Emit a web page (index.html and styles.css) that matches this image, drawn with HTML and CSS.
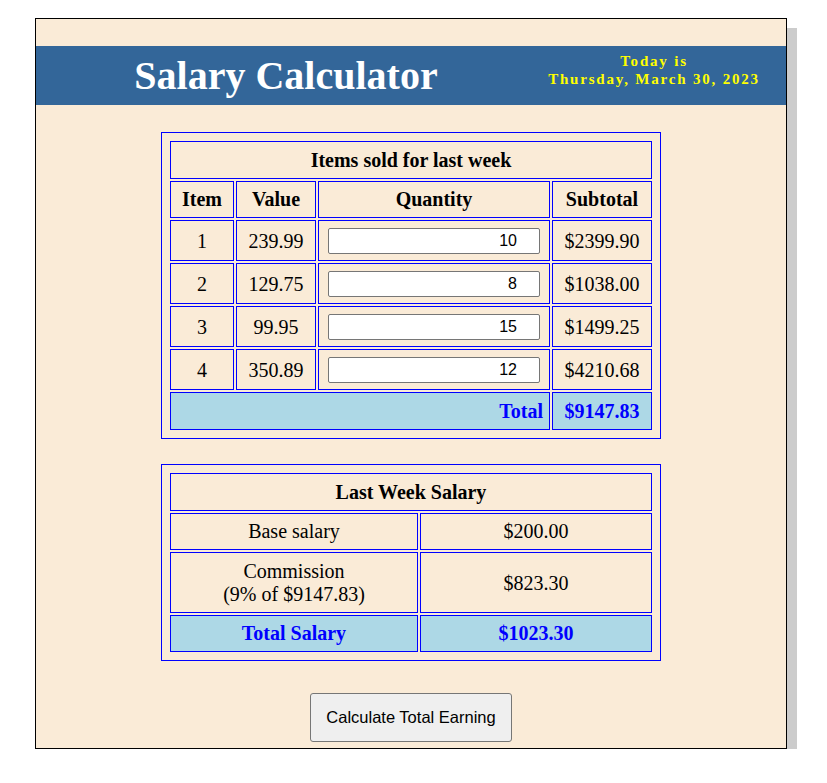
FILE: index.html
```html
<!DOCTYPE html>
<html lang="en">
<head>
<meta charset="utf-8">
<title>Salary Calculator</title>
<link rel="stylesheet" href="styles.css">
</head>
<body>
<div class="page">
  <header class="banner">
    <h1 class="title">Salary Calculator</h1>
    <div class="date">Today is<br>Thursday, March 30, 2023</div>
  </header>

  <table class="grid sales">
    <colgroup>
      <col class="w-item"><col class="w-value"><col class="w-qty"><col class="w-sub">
    </colgroup>
    <tr><th colspan="4" class="caption">Items sold for last week</th></tr>
    <tr class="head"><th>Item</th><th>Value</th><th>Quantity</th><th>Subtotal</th></tr>
    <tr class="input-row"><td>1</td><td>239.99</td><td class="qty-cell"><input class="qty" type="text" value="10"></td><td>$2399.90</td></tr>
    <tr class="input-row"><td>2</td><td>129.75</td><td class="qty-cell"><input class="qty" type="text" value="8"></td><td>$1038.00</td></tr>
    <tr class="input-row"><td>3</td><td>99.95</td><td class="qty-cell"><input class="qty" type="text" value="15"></td><td>$1499.25</td></tr>
    <tr class="input-row"><td>4</td><td>350.89</td><td class="qty-cell"><input class="qty" type="text" value="12"></td><td>$4210.68</td></tr>
    <tr class="total"><td colspan="3" class="total-label">Total</td><td>$9147.83</td></tr>
  </table>

  <table class="grid salary">
    <colgroup>
      <col class="w-left"><col class="w-right">
    </colgroup>
    <tr><th colspan="2" class="caption">Last Week Salary</th></tr>
    <tr><td>Base salary</td><td>$200.00</td></tr>
    <tr class="commission"><td>Commission<br>(9% of $9147.83)</td><td>$823.30</td></tr>
    <tr class="total"><td>Total Salary</td><td>$1023.30</td></tr>
  </table>

  <button class="calc" type="button">Calculate Total Earning</button>
</div>
</body>
</html>
```

FILE: styles.css
```css
body {
  margin: 0;
  background: #ffffff;
  font-family: "Liberation Serif", "Times New Roman", serif;
}

.page {
  box-sizing: border-box;
  width: 752px;
  margin: 18px 0 0 35px;
  padding: 27px 0 6px;
  border: 1px solid #000000;
  background: #faebd7;
  box-shadow: 10px 10px 0 #cccccc;
  display: flex;
  flex-direction: column;
  align-items: center;
}

.banner {
  align-self: stretch;
  height: 59px;
  background: #336699;
  display: flex;
}

.title {
  margin: 0;
  width: 500px;
  text-align: center;
  font-size: 40px;
  line-height: 59px;
  font-weight: bold;
  color: #ffffff;
}

.date {
  flex: 1;
  padding: 6px 14px 0 0;
  text-align: center;
  color: #ffff00;
  font-weight: bold;
  font-size: 15px;
  line-height: 18px;
  letter-spacing: 1.8px;
}

.grid {
  box-sizing: border-box;
  width: 500px;
  table-layout: fixed;
  border: 1px solid #0000ff;
  border-collapse: separate;
  border-spacing: 2px;
  padding: 6px;
  font-size: 20px;
  color: #000000;
}

.sales {
  margin-top: 27px;
}

.salary {
  margin-top: 25px;
}

.w-item { width: 64px; }
.w-value { width: 80px; }
.w-qty { width: 232px; }
.w-sub { width: 100px; }
.w-left { width: 248px; }
.w-right { width: 232px; }

.grid th,
.grid td {
  border: 1px solid #0000ff;
  text-align: center;
  padding: 6px;
  line-height: 23px;
  font-weight: normal;
}

.grid th {
  font-weight: bold;
}

.grid .caption {
  padding: 7px 6px 6px;
}

.grid .input-row td {
  padding: 7px 9px 6px;
}

.grid .commission td {
  padding: 7px 6px 6px;
}

.qty {
  display: block;
  box-sizing: border-box;
  width: 100%;
  height: 26px;
  margin: 0;
  padding: 0 22px 0 2px;
  border: 1px solid #767676;
  border-radius: 2px;
  background: #ffffff;
  font-family: "Liberation Sans", Arial, sans-serif;
  font-size: 16px;
  color: #000000;
  text-align: right;
}

.grid .total td {
  background: #add8e6;
  color: #0000ff;
  font-weight: bold;
  padding: 7px 6px 6px;
}

.grid .total .total-label {
  text-align: right;
}

.salary .total td {
  padding: 6px;
}

.calc {
  margin-top: 32px;
  padding: 14px 15px;
  border: 1px solid #767676;
  border-radius: 3px;
  background: #efefef;
  font-family: "Liberation Sans", Arial, sans-serif;
  font-size: 16.5px;
  line-height: 19px;
  color: #000000;
}
```
